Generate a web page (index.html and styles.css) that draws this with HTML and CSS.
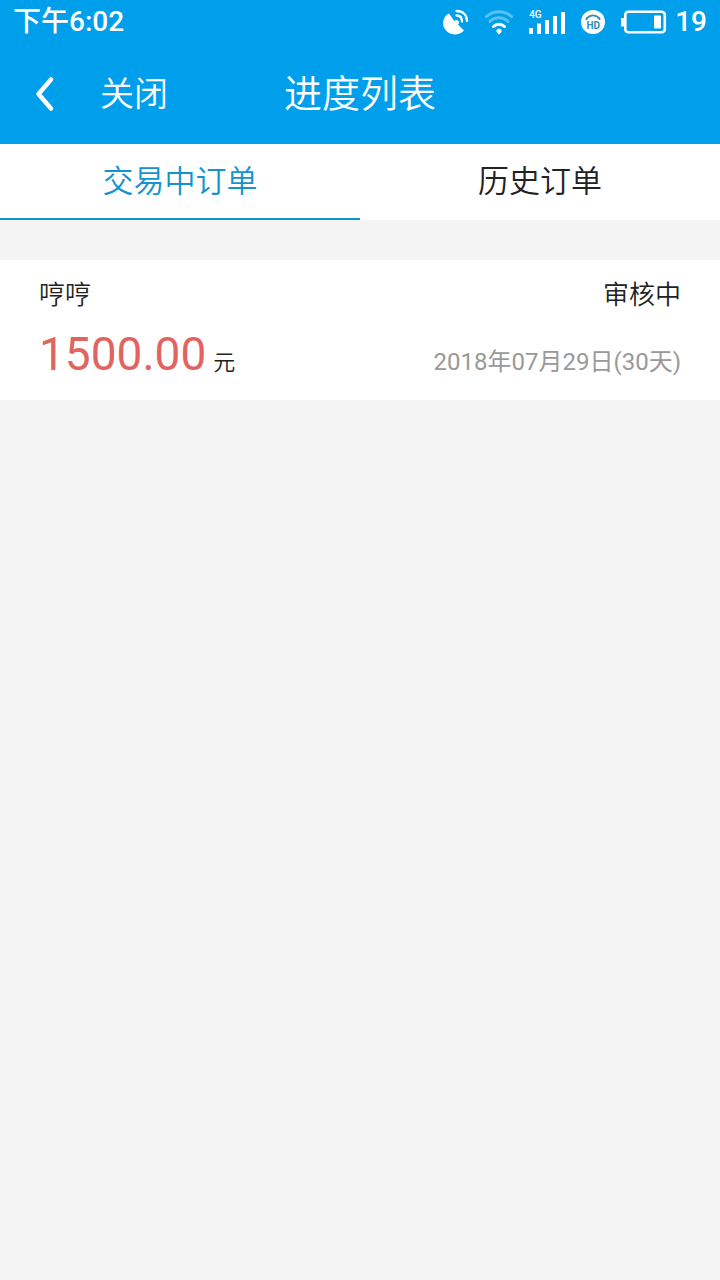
FILE: index.html
```html
<!DOCTYPE html>
<html lang="zh-CN">
<head>
<meta charset="utf-8">
<meta name="viewport" content="width=device-width, initial-scale=1">
<title>进度列表</title>
<link rel="stylesheet" href="styles.css">
</head>
<body>
<header class="top">
  <div class="status">
    <time class="clock">下午6:02</time>
    <div class="indicators">
      <svg class="satellite" width="28" height="28" viewBox="0 0 28 28" aria-hidden="true">
        <path d="M8 5.500C2 8 0 17 5 22.500c4.500 5 13 5.500 18 0L17 16.500a2.400 2.400 0 1 0-3.500-3.200z" fill="#fff"/>
        <path d="M15.500 7.500c3.500 0 5.500 2.500 5.500 6M15.500 3c6.500 0 10.500 4 10.500 10" fill="none" stroke="#fff" stroke-width="2.300" stroke-linecap="round"/>
      </svg>
      <svg class="wifi" width="30" height="28" viewBox="0 0 30 28" aria-hidden="true">
        <g fill="none" stroke="#fff" stroke-width="3" stroke-linecap="round">
          <path d="M2.500 8.500c7-6.500 18-6.500 25 0M6 13.500c5-5 13-5 18 0" opacity=".35"/>
          <path d="M9.500 18.500c3-3 8-3 11 0"/>
        </g>
        <path d="M15 20.500a2.700 2.700 0 0 1 2.700 2.500c0 1-2.700 3.500-2.700 3.500s-2.700-2.500-2.700-3.500a2.700 2.700 0 0 1 2.700-2.500z" fill="#fff"/>
      </svg>
      <div class="signal">
        <span class="network">4G</span>
        <svg width="38" height="28" viewBox="0 0 38 28" aria-hidden="true">
          <path d="M1 20h4v6H1zM9 15.500h4V26H9zM17 12h4v14h-4zM25 8h4v18h-4zM33 4h4v22h-4z" fill="#fff"/>
        </svg>
      </div>
      <div class="hd">
        <svg width="24" height="24" viewBox="0 0 24 24" aria-hidden="true">
          <circle cx="12" cy="12" r="12" fill="#fff"/>
          <path d="M5.500 10V8.500c4-4 9-4 13 0V10" fill="none" stroke="#2a91bd" stroke-width="1.800"/>
        </svg>
        <span class="hd-text">HD</span>
      </div>
      <svg class="battery" width="46" height="26" viewBox="0 0 46 26" aria-hidden="true">
        <rect x="4.300" y="2.800" width="39.500" height="20.500" rx="3" fill="none" stroke="#fff" stroke-width="2.600"/>
        <path d="M0 9h3v8.500H0z" fill="#fff"/>
        <rect x="33" y="6.500" width="7" height="13" rx="1" fill="#fff"/>
      </svg>
      <span class="level">19</span>
    </div>
  </div>
  <nav class="bar">
    <div class="actions">
      <button class="back" type="button" aria-label="返回">
        <svg width="22" height="38" viewBox="0 0 22 38" aria-hidden="true">
          <path d="M17 4.500L4.500 19 17 33.500" fill="none" stroke="#fff" stroke-width="4.500" stroke-linecap="round" stroke-linejoin="round"/>
        </svg>
      </button>
      <button class="close" type="button">关闭</button>
    </div>
    <h1 class="title">进度列表</h1>
  </nav>
</header>
<div class="tabs" role="tablist">
  <button class="tab tab-active" type="button" role="tab" aria-selected="true">交易中订单</button>
  <button class="tab" type="button" role="tab" aria-selected="false">历史订单</button>
</div>
<main class="orders">
  <article class="order">
    <div class="row">
      <h2 class="name">哼哼</h2>
      <span class="state">审核中</span>
    </div>
    <div class="row row-bottom">
      <p class="price"><span class="amount">1500.00</span><span class="unit">元</span></p>
      <time class="date">2018年07月29日(30天)</time>
    </div>
  </article>
</main>
</body>
</html>
```
FILE: styles.css
```css
* {
  box-sizing: border-box;
}

body {
  margin: 0;
  background: #f4f4f4;
  color: #222;
  font-family: Roboto, "Noto Sans CJK SC", sans-serif;
  font-weight: 350;
}

button {
  margin: 0;
  padding: 0;
  border: 0;
  background: none;
  color: inherit;
  font: inherit;
}

h1,
h2,
p {
  margin: 0;
  font-weight: inherit;
}

svg {
  display: block;
}

.top {
  background: #009feb;
  color: #fff;
}

.status {
  display: flex;
  align-items: center;
  justify-content: space-between;
  height: 44px;
  padding: 0 13px;
  font-size: 28px;
  font-weight: 500;
  line-height: 44px;
}

.indicators {
  display: flex;
  align-items: center;
}

.wifi {
  margin-left: 15px;
}

.signal {
  position: relative;
  margin-left: 14px;
}

.network {
  position: absolute;
  top: 2px;
  left: 1px;
  font-size: 10px;
  line-height: 10px;
}

.hd {
  position: relative;
  margin-left: 15px;
}

.hd-text {
  position: absolute;
  top: 10px;
  left: 0;
  width: 100%;
  color: #2a91bd;
  font-size: 10px;
  font-weight: 700;
  line-height: 12px;
  text-align: center;
}

.battery {
  margin-left: 16px;
}

.level {
  margin-left: 8px;
}

.bar {
  display: grid;
  grid-template-columns: 1fr auto 1fr;
  align-items: center;
  height: 100px;
}

.actions {
  display: flex;
  align-items: center;
  padding-left: 34px;
}

.close {
  margin-left: 44px;
  font-size: 34px;
  line-height: 48px;
}

.title {
  font-size: 38px;
  line-height: 56px;
}

.tabs {
  display: flex;
  background: #fff;
}

.tab {
  flex: 1;
  height: 76px;
  padding-top: 2px;
  border-bottom: 2px solid transparent;
  font-size: 31px;
  line-height: 72px;
}

.tab-active {
  border-color: #1593cc;
  color: #1593cc;
}

.orders {
  padding-top: 40px;
}

.order {
  padding: 15px 39px 16px;
  background: #fff;
}

.row {
  display: flex;
  align-items: baseline;
  justify-content: space-between;
}

.name,
.state {
  font-size: 26px;
  line-height: 40px;
}

.row-bottom {
  padding-top: 9px;
}

.amount {
  color: #e0645f;
  font-size: 46px;
  line-height: 60px;
  font-weight: 400;
}

.unit {
  margin-left: 7px;
  font-size: 22px;
}

.date {
  color: #999;
  font-size: 24px;
  font-weight: 400;
}
```
